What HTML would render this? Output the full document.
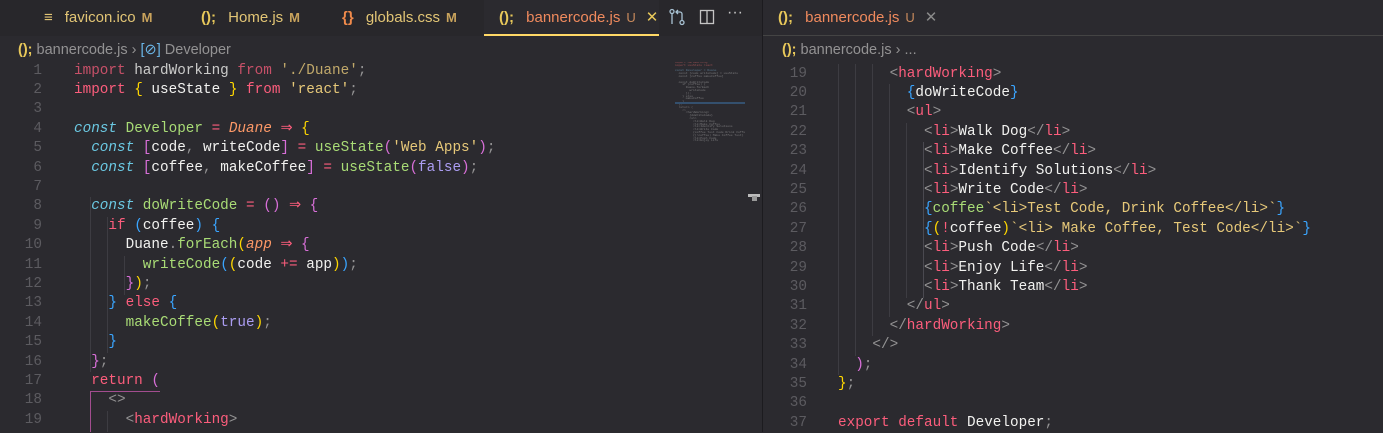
<!DOCTYPE html>
<html><head><meta charset="utf-8"><style>
body{margin:0;width:1383px;height:432px;background:#2b2a2f;overflow:hidden;font-family:"Liberation Sans",sans-serif;position:relative}
.bar{position:absolute;left:0;top:0;width:1383px;height:36px;background:#28272b}
.tab{position:absolute;top:0;height:36px;line-height:36px;font-size:15px;color:#e2c575;white-space:nowrap}
.tab i{font-style:normal;font-weight:bold;margin-right:8px}
.tab .m{font-size:13px;color:#c9a35c;margin-left:6px;font-weight:bold}
.bc{position:absolute;top:40px;height:20px;line-height:20px;font-size:14.5px;color:#939293;white-space:nowrap}
.ln,.cd{position:absolute;font-family:"Liberation Mono",monospace;font-size:14.33px;white-space:pre;line-height:19.4px;height:19.4px}
.ln{color:#5c5b60;text-align:right;width:40px}
.k{color:#fc5d7c}.c{color:#6bc8e2;font-style:italic}.f{color:#a9dc76}.s{color:#e6c879}.w{color:#f2f2f0}.p{color:#939293}.o{color:#fc9867;font-style:italic}.y{color:#ffd700}.mg{color:#d86fd8}.b{color:#3aa5ff}
.g{position:absolute;width:1px;background:#3d3c42}
</style></head><body>
<div class="bar"></div>
<div class="tab" style="left:44px"><span style="color:#e2c575;margin-right:12px">≡</span>favicon.ico<span class="m">M</span></div>
<div class="tab" style="left:201px"><i style="color:#e8c85a">(); </i>Home.js<span class="m">M</span></div>
<div class="tab" style="left:342px"><i style="color:#f08a4b">{} </i> globals.css<span class="m">M</span></div>
<div class="tab" style="left:484px;width:175px;background:#2b2a2f;border-bottom:2px solid #ffd866;height:34px;line-height:36px;color:#f08a5d"><span style="margin-left:15px"><i style="color:#e8c85a">(); </i>bannercode.js<span class="m" style="color:#c98a5c;font-weight:normal">U</span><span style="margin-left:10px;color:#e8c85a">✕</span></span></div>
<svg style="position:absolute;left:668px;top:8px" width="18" height="18" viewBox="0 0 18 18" fill="none" stroke="#a9c3d4" stroke-width="1.3"><circle cx="4" cy="3.5" r="2"/><circle cx="14" cy="14.5" r="2"/><path d="M4 5.5V16M14 12.5V6a2 2 0 0 0-2-2H8M10 2L8 4l2 2"/></svg>
<svg style="position:absolute;left:699px;top:9px" width="16" height="16" fill="none" stroke="#c5c5c5" stroke-width="1.3"><rect x="1.5" y="1.5" width="13" height="13"/><path d="M8 1.5v13"/></svg>
<div style="position:absolute;left:727px;top:4px;color:#c5c5c5;font-size:16px">···</div>
<div style="position:absolute;left:762px;top:0;width:1px;height:432px;background:#1c1b1f"></div>
<div style="position:absolute;left:763px;top:0;width:620px;height:36px;background:#28272b"></div>
<div class="tab" style="left:763px;width:620px;height:35px;background:#2b2a2f;border-bottom:1px solid #444;color:#f08a5d"><span style="margin-left:15px"><i style="color:#e8c85a">(); </i>bannercode.js<span class="m" style="color:#c98a5c;font-weight:normal">U</span><span style="margin-left:10px;color:#8a8a8a">✕</span></span></div>
<div class="bc" style="left:18px"><b style="color:#e8c85a">();</b> bannercode.js <span>›</span> <span style="color:#6bb6e8">[⊘]</span> Developer</div>
<div class="bc" style="left:782px"><b style="color:#e8c85a">();</b> bannercode.js › ...</div>
<!-- minimap -->
<div style="position:absolute;left:675px;top:62px;width:70px;height:80px;opacity:.6;font-size:3px;line-height:2.8px;color:#aaa;font-family:monospace;white-space:pre;overflow:hidden"><span style="color:#d66">import hardWorking</span>
<span style="color:#d66">import useState react</span>

<span style="color:#7ac">const Developer = Duane</span>
  const [code writeCode] = useState
  const [coffee makeCoffee]

  const doWriteCode
    if (coffee) {
      Duane.forEach
        writeCode
      });
    } else
      makeCoffee
    }
  };
  return (
    &lt;&gt;
      &lt;hardWorking&gt;
        {doWriteCode}
        &lt;ul&gt;
          &lt;li&gt;Walk Dog
          &lt;li&gt;Make Coffee
          &lt;li&gt;Identify Solutions
          &lt;li&gt;Write Code
          {coffee Test Code Drink Coffee}
          {(!coffee) Make Coffee Test}
          &lt;li&gt;Push Code
          &lt;li&gt;Enjoy Life
          &lt;li&gt;Thank Team
</div>
<div style="position:absolute;left:675px;top:102px;width:70px;height:2px;background:#34506e"></div>
<div style="position:absolute;left:748px;top:194px;width:12px;height:3px;background:#bbb"></div>
<div style="position:absolute;left:752px;top:196px;width:5px;height:5px;background:#999"></div>

<!-- indent guides left -->
<div class="g" style="left:90px;top:197px;height:175px"></div>
<div class="g" style="left:107px;top:217px;height:136px"></div>
<div class="g" style="left:124px;top:256px;height:39px"></div>
<div class="g" style="left:107px;top:314px;height:20px"></div>
<div class="g" style="left:90px;top:392px;width:1px;height:40px;background:#a24d8f"></div>
<div class="g" style="left:90px;top:391px;width:70px;height:1px;background:#a24d8f"></div>
<div class="g" style="left:107px;top:411px;height:21px"></div>
<!-- right guides -->
<div class="g" style="left:838px;top:64px;height:311px"></div>
<div class="g" style="left:855px;top:64px;height:292px"></div>
<div class="g" style="left:872px;top:64px;height:272px"></div>
<div class="g" style="left:889px;top:84px;height:233px"></div>
<div class="g" style="left:906px;top:123px;height:175px"></div>
<div class="g" style="left:923px;top:142px;height:156px;background:#4a4950"></div>

<div id="L"></div>
<script>
const L=[
[1,0,'<span class="k" style="opacity:.75">import</span> <span class="w" style="opacity:.8">hardWorking</span> <span class="k" style="opacity:.75">from</span> <span class="s" style="opacity:.8">\'./Duane\'</span><span class="p">;</span>'],
[2,0,'<span class="k">import</span> <span class="y">{</span> <span class="w">useState</span> <span class="y">}</span> <span class="k">from</span> <span class="s">\'react\'</span><span class="p">;</span>'],
[3,0,''],
[4,0,'<span class="c">const</span> <span class="f">Developer</span> <span class="k">=</span> <span class="o">Duane</span> <span class="k">⇒</span> <span class="y">{</span>'],
[5,1,'<span class="c">const</span> <span class="mg">[</span><span class="w">code</span><span class="p">,</span> <span class="w">writeCode</span><span class="mg">]</span> <span class="k">=</span> <span class="f">useState</span><span class="mg">(</span><span class="s">\'Web Apps\'</span><span class="mg">)</span><span class="p">;</span>'],
[6,1,'<span class="c">const</span> <span class="mg">[</span><span class="w">coffee</span><span class="p">,</span> <span class="w">makeCoffee</span><span class="mg">]</span> <span class="k">=</span> <span class="f">useState</span><span class="mg">(</span><span class="mg" style="color:#ab9df2">false</span><span class="mg">)</span><span class="p">;</span>'],
[7,0,''],
[8,1,'<span class="c">const</span> <span class="f">doWriteCode</span> <span class="k">=</span> <span class="mg">()</span> <span class="k">⇒</span> <span class="mg">{</span>'],
[9,2,'<span class="k">if</span> <span class="b">(</span><span class="w">coffee</span><span class="b">)</span> <span class="b">{</span>'],
[10,3,'<span class="w">Duane</span><span class="p">.</span><span class="f">forEach</span><span class="y">(</span><span class="o">app</span> <span class="k">⇒</span> <span class="mg">{</span>'],
[11,4,'<span class="f">writeCode</span><span class="b">(</span><span class="y">(</span><span class="w">code</span> <span class="k">+=</span> <span class="w">app</span><span class="y">)</span><span class="b">)</span><span class="p">;</span>'],
[12,3,'<span class="mg">}</span><span class="y">)</span><span class="p">;</span>'],
[13,2,'<span class="b">}</span> <span class="k">else</span> <span class="b">{</span>'],
[14,3,'<span class="f">makeCoffee</span><span class="y">(</span><span style="color:#ab9df2">true</span><span class="y">)</span><span class="p">;</span>'],
[15,2,'<span class="b">}</span>'],
[16,1,'<span class="mg">}</span><span class="p">;</span>'],
[17,1,'<span class="k">return</span> <span class="mg">(</span>'],
[18,2,'<span class="p">&lt;&gt;</span>'],
[19,3,'<span class="p">&lt;</span><span class="k">hardWorking</span><span class="p">&gt;</span>']];
const R=[
[19,3,'<span class="p">&lt;</span><span class="k">hardWorking</span><span class="p">&gt;</span>'],
[20,4,'<span class="b">{</span><span class="w">doWriteCode</span><span class="b">}</span>'],
[21,4,'<span class="p">&lt;</span><span class="k">ul</span><span class="p">&gt;</span>'],
[22,5,'<span class="p">&lt;</span><span class="k">li</span><span class="p">&gt;</span><span class="w">Walk Dog</span><span class="p">&lt;/</span><span class="k">li</span><span class="p">&gt;</span>'],
[23,5,'<span class="p">&lt;</span><span class="k">li</span><span class="p">&gt;</span><span class="w">Make Coffee</span><span class="p">&lt;/</span><span class="k">li</span><span class="p">&gt;</span>'],
[24,5,'<span class="p">&lt;</span><span class="k">li</span><span class="p">&gt;</span><span class="w">Identify Solutions</span><span class="p">&lt;/</span><span class="k">li</span><span class="p">&gt;</span>'],
[25,5,'<span class="p">&lt;</span><span class="k">li</span><span class="p">&gt;</span><span class="w">Write Code</span><span class="p">&lt;/</span><span class="k">li</span><span class="p">&gt;</span>'],
[26,5,'<span class="b">{</span><span class="f">coffee</span><span class="s">`&lt;li&gt;Test Code, Drink Coffee&lt;/li&gt;`</span><span class="b">}</span>'],
[27,5,'<span class="b">{</span><span class="y">(</span><span class="k">!</span><span class="w">coffee</span><span class="y">)</span><span class="s">`&lt;li&gt; Make Coffee, Test Code&lt;/li&gt;`</span><span class="b">}</span>'],
[28,5,'<span class="p">&lt;</span><span class="k">li</span><span class="p">&gt;</span><span class="w">Push Code</span><span class="p">&lt;/</span><span class="k">li</span><span class="p">&gt;</span>'],
[29,5,'<span class="p">&lt;</span><span class="k">li</span><span class="p">&gt;</span><span class="w">Enjoy Life</span><span class="p">&lt;/</span><span class="k">li</span><span class="p">&gt;</span>'],
[30,5,'<span class="p">&lt;</span><span class="k">li</span><span class="p">&gt;</span><span class="w">Thank Team</span><span class="p">&lt;/</span><span class="k">li</span><span class="p">&gt;</span>'],
[31,4,'<span class="p">&lt;/</span><span class="k">ul</span><span class="p">&gt;</span>'],
[32,3,'<span class="p">&lt;/</span><span class="k">hardWorking</span><span class="p">&gt;</span>'],
[33,2,'<span class="p">&lt;/&gt;</span>'],
[34,1,'<span class="mg">)</span><span class="p">;</span>'],
[35,0,'<span class="y">}</span><span class="p">;</span>'],
[36,0,''],
[37,0,'<span class="k">export</span> <span class="k">default</span> <span class="w">Developer</span><span class="p">;</span>']];
let h='';
for(const [n,i,t] of L){const y=61.5+(n-1)*19.4;h+=`<div class="ln" style="left:2px;top:${y}px">${n}</div><div class="cd" style="left:${74+i*17.2}px;top:${y}px">${t}</div>`;}
for(const [n,i,t] of R){const y=64.5+(n-19)*19.4;h+=`<div class="ln" style="left:767px;top:${y}px">${n}</div><div class="cd" style="left:${838+i*17.2}px;top:${y}px">${t}</div>`;}
document.getElementById('L').innerHTML=h;
</script>
</body></html>
